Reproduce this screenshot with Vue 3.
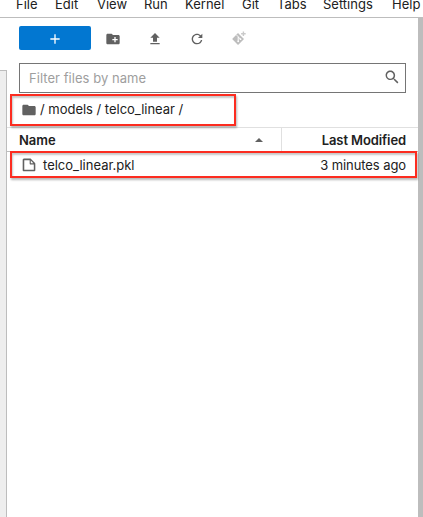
<script setup>
const menus = ['File', 'Edit', 'View', 'Run', 'Kernel', 'Git', 'Tabs', 'Settings', 'Help']
const files = [{ name: 'telco_linear.pkl', modified: '3 minutes ago' }]
</script>

<template>
  <div class="app">
    <nav class="menubar">
      <span v-for="m in menus" :key="m">{{ m }}</span>
    </nav>
    <div class="body">
      <aside class="rail"><div class="rail-fill"></div></aside>
      <main class="browser">
        <div class="toolbar">
          <button class="new" aria-label="New launcher">
            <svg width="16" height="16" viewBox="0 0 24 24"><path fill="#fff" d="M19 13h-6v6h-2v-6H5v-2h6V5h2v6h6v2z" /></svg>
          </button>
          <svg class="tool" viewBox="0 0 24 24"><path fill="#616161" d="M20 6h-8l-2-2H4c-1.11 0-1.99.89-1.99 2L2 18c0 1.11.89 2 2 2h16c1.11 0 2-.89 2-2V8c0-1.11-.89-2-2-2zm-1 8h-3v3h-2v-3h-3v-2h3V9h2v3h3v2z" /></svg>
          <svg class="tool" viewBox="0 0 24 24"><path fill="#616161" d="M9 16h6v-6h4l-7-7-7 7h4zm-4 2h14v2H5z" /></svg>
          <svg class="tool" viewBox="0 0 18 18"><path fill="#616161" d="M9 13.5c-2.49 0-4.5-2.01-4.5-4.5S6.51 4.5 9 4.5c1.24 0 2.36.52 3.17 1.33L10 8h5V3l-1.76 1.76C12.15 3.68 10.66 3 9 3 5.69 3 3.01 5.69 3.01 9S5.69 15 9 15c2.97 0 5.43-2.16 5.9-5h-1.52c-.46 2-2.24 3.5-4.38 3.5z" /></svg>
          <svg class="tool git" viewBox="0 0 16 16">
            <path fill="#bdbdbd" d="M1.6 8.4 7 3l6 6-5.4 5.5a.8.8 0 0 1-1.1 0L1.6 9.6a.85.85 0 0 1 0-1.2z" />
            <path fill="none" stroke="#fff" stroke-width="1" d="M5.6 5.1 7.2 6.7v4.8M7.2 6.9l2.2 2.2" />
            <circle cx="7.2" cy="11.3" r=".9" fill="#fff" /><circle cx="9.5" cy="9.2" r=".9" fill="#fff" />
            <path stroke="#cacaca" stroke-width="1.4" d="M12.4 1.5v4.6M10.1 3.8h4.6" />
          </svg>
        </div>
        <div class="filter">
          <span>Filter files by name</span>
          <svg width="18" height="18" viewBox="0 0 18 18"><path fill="#616161" d="M12.1 10.9h-.7l-.2-.2c.8-.9 1.3-2.2 1.3-3.5 0-3-2.4-5.4-5.4-5.4S1.8 4.2 1.8 7.1s2.4 5.4 5.4 5.4c1.3 0 2.5-.5 3.5-1.3l.2.2v.7l4.1 4.1 1.2-1.2-4.1-4.1zm-5 0c-2.1 0-3.7-1.7-3.7-3.7s1.7-3.7 3.7-3.7 3.7 1.7 3.7 3.7-1.6 3.7-3.7 3.7z" /></svg>
        </div>
        <div class="crumbs">
          <svg width="16" height="16" viewBox="0 0 24 24"><path fill="#616161" d="M10 4H4c-1.1 0-1.99.9-1.99 2L2 18c0 1.1.9 2 2 2h16c1.1 0 2-.9 2-2V8c0-1.1-.9-2-2-2h-8l-2-2z" /></svg>
          <span>/ models / telco_linear /</span>
          <i class="mark mark-path"></i>
        </div>
        <div class="head">
          <div class="name"><span>Name</span><i class="caret"></i></div>
          <div class="modified">Last Modified</div>
        </div>
        <div v-for="f in files" :key="f.name" class="row">
          <svg width="16" height="16" viewBox="0 0 22 22"><path fill="#616161" d="M19.3 8.2l-5.5-5.5c-.3-.3-.7-.5-1.2-.5H3.9c-.8.1-1.6.9-1.6 1.8v14.1c0 .9.7 1.6 1.6 1.6h14.2c.9 0 1.6-.7 1.6-1.6V9.4c.1-.5-.1-.9-.4-1.2zm-5.8-3.3l3.4 3.6h-3.4V4.9zm3.9 12.7H4.7c-.1 0-.2 0-.2-.2V4.7c0-.2.1-.3.2-.3h7.2v4.4s0 .8.3 1.1c.3.3 1.1.3 1.1.3h4.3v7.2s-.1.2-.2.2z" /></svg>
          <span class="file">{{ f.name }}</span>
          <span class="time">{{ f.modified }}</span>
          <i class="mark mark-row"></i>
        </div>
      </main>
      <div class="edge"></div>
    </div>
  </div>
</template>

<style>
body { margin: 0; background: #fff; overflow: hidden; }
</style>

<style scoped>
* { box-sizing: border-box; }
.app { width: 423px; height: 517px; overflow: hidden; display: flex; flex-direction: column; background: #fff; color: #212121; font: 13px/16px Inter, sans-serif; white-space: nowrap; }
.menubar { height: 18px; flex: none; display: grid; grid-template-columns: 39px 42px 47px 41px 57px 35px 46px 69px 31px; padding-left: 16px; border-bottom: 1px solid #bdbdbd; line-height: 8px; }
.body { flex: 1; display: flex; min-height: 0; }
.rail { width: 7px; padding-top: 52px; display: flex; }
.rail-fill { flex: 1; background: #eee; border-top: 1px solid #bdbdbd; border-right: 1px solid #bdbdbd; }
.browser { flex: 1; min-width: 0; }
.edge { width: 5px; background: #bdbdbd; }
.toolbar { height: 45px; padding: 8px 0 0 12px; display: flex; align-items: flex-start; }
.new { width: 72px; height: 24px; border: 0; border-radius: 2px; background: #0277d1; padding: 0; display: flex; align-items: center; justify-content: center; margin-right: 14px; }
.new svg { margin-top: 2px; }
.tool { width: 16px; height: 16px; margin: 5px 26px 0 0; }
.tool.git { margin-top: 4px; }
.filter { height: 30px; margin: 0 12px; border: 1px solid #757575; display: flex; align-items: center; justify-content: space-between; padding: 0 4px 0 9px; color: #9e9e9e; letter-spacing: .04px; }
.filter svg { width: 16px; height: 16px; margin: -3px 1px 0 0; }
.crumbs { position: relative; height: 34px; padding: 0 0 0 14px; display: flex; align-items: center; gap: 3px; }
.crumbs span { padding-bottom: 2px; letter-spacing: -.02px; }
.head { height: 25px; border-top: 1px solid #e0e0e0; border-bottom: 1px solid #bdbdbd; display: flex; font-weight: 600; }
.name { width: 275px; border-right: 1px solid #e0e0e0; padding: 0 18px 0 12px; display: flex; align-items: center; justify-content: space-between; }
.caret { border: 4.5px solid transparent; border-top: 0; border-bottom: 4.5px solid #616161; }
.modified { flex: 1; padding-right: 12px; display: flex; align-items: center; justify-content: flex-end; letter-spacing: -.1px; }
.row { position: relative; height: 26px; padding: 0 12px 0 14px; display: flex; align-items: center; }
.file { margin-left: 6px; flex: 1; }
.time { letter-spacing: -.08px; }
.mark { position: absolute; border: 2px solid #fc2c20; box-shadow: 1px 2px 2px rgba(0,0,0,.28), inset 1px 2px 2px rgba(0,0,0,.22); }
.mark-path { left: 3px; top: 1px; width: 226px; height: 32px; }
.mark-row { left: 3px; top: -1px; width: 407px; height: 27px; }
</style>
